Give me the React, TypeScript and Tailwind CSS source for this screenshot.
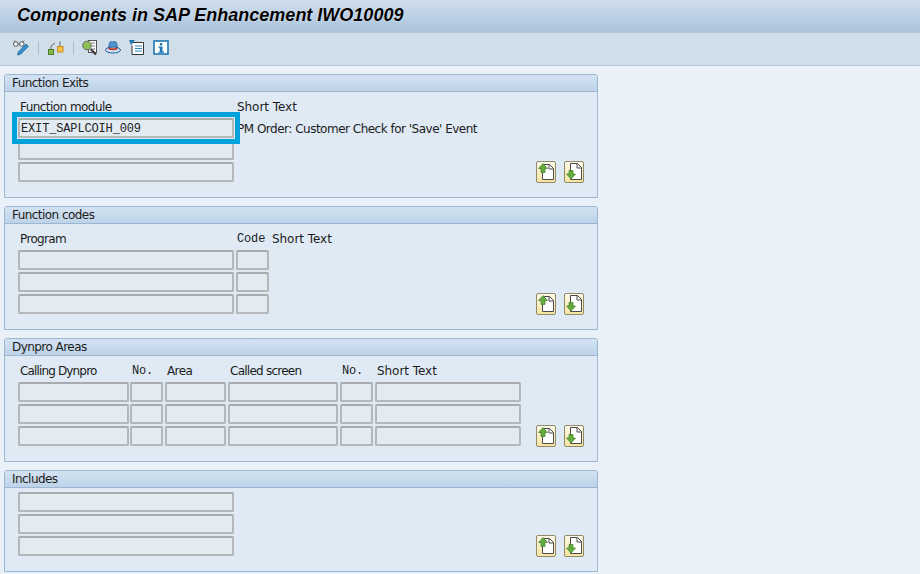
import React from "react";

const MONO = "font-['Liberation_Mono',monospace]";

function Field({ w, children }: { w: string; children?: React.ReactNode }) {
  return (
    <div
      className={`${w} h-5 shrink-0 rounded-[2px] border-2 border-[#b5b8ba] border-t-[#a9acae] bg-[#e3ebf2] pl-[1px] ${MONO} text-[12px] leading-[18px] tracking-[-0.15px] text-[#222] whitespace-pre`}
    >
      {children}
    </div>
  );
}

function Label({ w, className = "", children }: { w: string; className?: string; children?: React.ReactNode }) {
  return (
    <div
      className={`${w} shrink-0 whitespace-pre font-['DejaVu_Sans',sans-serif] text-[12px] leading-[16px] text-[#1c1c1c] ${className}`}
    >
      {children}
    </div>
  );
}

function MonoLabel({ w, className = "pl-[1px]", children }: { w: string; className?: string; children?: React.ReactNode }) {
  return (
    <div className={`${w} shrink-0 whitespace-pre ${className} ${MONO} text-[12px] leading-[15px] tracking-[-0.15px] text-[#1c1c1c]`}>
      {children}
    </div>
  );
}

function PageBtn({ down }: { down?: boolean }) {
  return (
    <div className="flex h-[22px] w-[20px] items-center justify-center rounded-[2px] border border-[#8f8a6a] bg-gradient-to-b from-[#fdf9e6] to-[#f8e4a0]">
      <svg width="18" height="20" viewBox="0 0 18 20">
        {down ? (
          <>
            <path d="M5.500 1.500h7l4 4v12h-11z" fill="#fff" stroke="#4a4a4a" strokeWidth="1" />
            <path d="M12 1.500v4.500h4.500" fill="none" stroke="#4a4a4a" strokeWidth="1" />
            <path d="M4 8.500h4v3.500h2.500l-4.500 5-4.500-5H4z" fill="#63ad3e" stroke="#3f7d24" strokeWidth=".7" />
          </>
        ) : (
          <>
            <path d="M7 2.500h5.500l4 4v11h-11v-7" fill="#fff" stroke="#4a4a4a" strokeWidth="1" />
            <path d="M12 2.500v4.500h4.500" fill="none" stroke="#4a4a4a" strokeWidth="1" />
            <path d="M6 1.500l4.500 5H8v4H4v-4H1.500z" fill="#63ad3e" stroke="#3f7d24" strokeWidth=".7" />
          </>
        )}
      </svg>
    </div>
  );
}

function Panel({
  title,
  h,
  children,
}: {
  title: string;
  h: string;
  children: React.ReactNode;
}) {
  return (
    <section className={`relative w-[594px] ${h} rounded-t-[3px] border border-[#9cb7d3] bg-[#dfeaf5]`}>
      <div className="h-[17px] rounded-t-[2px] border-b border-[#9cb7d3] bg-gradient-to-b from-[#d3e2f1] to-[#bed3e8] pl-[7px] font-['DejaVu_Sans',sans-serif] text-[12px] leading-[17px] tracking-[-0.55px] text-[#1c1c1c]">
        {title}
      </div>
      {children}
      <div className="absolute bottom-[14px] right-[13px] flex gap-[8px]">
        <PageBtn />
        <PageBtn down />
      </div>
    </section>
  );
}

function Tool({ children, w = 16 }: { children: React.ReactNode; w?: number }) {
  return (
    <svg width={w} height="16" viewBox={`0 0 ${w} 16`} className="shrink-0">
      {children}
    </svg>
  );
}

const Sep = ({ className = "mx-[9px]" }: { className?: string }) => <div className={`${className} h-[14px] w-px bg-[#a9bccf]`} />;

export default function App() {
  return (
    <div className="h-[574px] w-[920px] overflow-hidden bg-[#e9f0f7]">
      <header className="flex h-8 items-center bg-gradient-to-b from-[#cfdeed] to-[#aac3dc] pb-[2px] pl-[17px] font-['Liberation_Sans',sans-serif] text-[18px] font-bold italic text-black [text-shadow:0_0_1px_#fff]">
        Components in SAP Enhancement IWO10009
      </header>
      <div className="flex h-[34px] items-center border-t border-b border-[#b4c6d8] bg-[#d0deea] pb-[2px] pl-[13px]">
        <Tool>
          <circle cx="2.800" cy="4" r="2.300" fill="#eef3f7" stroke="#555" />
          <circle cx="8.800" cy="4" r="2.300" fill="#eef3f7" stroke="#555" />
          <path d="M5 4h1.500M1 2l1-1.500M10 2l1-1.500" stroke="#555" strokeWidth=".8" fill="none" />
          <path d="M4.500 15l.8-3 7.700-8 2.500 2.300-7.800 7.900z" fill="#3d8fc9" stroke="#1f6ea8" strokeWidth=".8" />
        </Tool>
        <Sep />
        <Tool>
          <rect x=".5" y="9.500" width="5" height="5" fill="#86b84a" stroke="#4f7d25" />
          <rect x="9.500" y="6.500" width="5.500" height="5.500" fill="#f5c04a" stroke="#d08a20" />
          <path d="M3 9V6l4-3M12 6V1.500" fill="none" stroke="#666" strokeWidth="1" />
        </Tool>
        <Sep className="ml-[9px] mr-[8px]" />
        <div className="flex items-center gap-[8px]">
          <Tool w={15}>
            <rect x="6.500" y=".5" width="8" height="12" fill="#fff" stroke="#555" />
            <path d="M9 3h4M10 6h3M10 9h3" stroke="#777" />
            <circle cx="5" cy="5.500" r="4.300" fill="#8cc152" stroke="#666" />
            <path d="M8.500 9l5.500 5.500" stroke="#3f3f3f" strokeWidth="2.200" />
          </Tool>
          <Tool>
            <path d="M3.500 8l1-5.500c1.500-1.500 3-.7 3.500-.5.500-.2 2-1 3.500.5l1 5.500z" fill="#4f95cf" stroke="#1f5f95" strokeWidth=".8" />
            <ellipse cx="8" cy="10" rx="7.500" ry="3" fill="#cfe3f5" stroke="#1f5f95" />
            <path d="M3.500 8.300c3 1.300 6 1.300 9 0" stroke="#c0392b" strokeWidth="2" fill="none" />
          </Tool>
          <Tool>
            <path d="M0 0h6L2 5z" fill="#1f77b4" />
            <path d="M4 2.500h10.500v12H3v-9" fill="#fff" stroke="#333" />
            <path d="M6 6h7M6 8.500h7M6 11h7" stroke="#2a86c4" />
          </Tool>
          <Tool>
            <rect x="1" y="1" width="14" height="13" fill="#fff" stroke="#1f77b4" strokeWidth="1.600" />
            <rect x="6.800" y="3" width="2.500" height="2.400" fill="#1f77b4" />
            <path d="M5.500 6.500h4v5H11v1.200H5.500v-1.200h1.300V7.700H5.500z" fill="#1f77b4" />
          </Tool>
        </div>
      </div>

      <main className="flex flex-col gap-2 pl-1 pt-2">
        <Panel title="Function Exits" h="h-[124px]">
          <div className="relative pl-[13px] pt-[7px]">
            <div className="flex">
              <Label w="w-[219px]" className="pl-[2px] tracking-[-0.55px]">Function module</Label>
              <Label w="w-[240px]" className="tracking-[-0.05px]">Short Text</Label>
            </div>
            <div className="mt-[3px] flex flex-col gap-[2px]">
              <div className="flex items-center">
                <div className="relative">
                  <Field w="w-[216px]">EXIT_SAPLCOIH_009</Field>
                  <div className="pointer-events-none absolute -inset-x-[6px] -inset-y-[6px] border-[5px] border-[#00a3d9]" />
                </div>
                <span className="ml-[3px] pt-[2px] font-['DejaVu_Sans',sans-serif] text-[12px] tracking-[-0.5px] text-[#1c1c1c]">
                  PM Order: Customer Check for 'Save' Event
                </span>
              </div>
              <Field w="w-[216px]" />
              <Field w="w-[216px]" />
            </div>
          </div>
        </Panel>

        <Panel title="Function codes" h="h-[124px]">
          <div className="pl-[13px] pt-[7px]">
            <div className="flex items-center">
              <Label w="w-[218px]" className="pl-[2px] tracking-[-0.65px]">Program</Label>
              <MonoLabel w="w-[35px]">Code</MonoLabel>
              <Label w="w-[100px]" className="pl-[1px] tracking-[-0.05px]">Short Text</Label>
            </div>
            <div className="mt-[3px] flex flex-col gap-[2px]">
              {[0, 1, 2].map((i) => (
                <div key={i} className="flex gap-[2px]">
                  <Field w="w-[216px]" />
                  <Field w="w-[33px]" />
                </div>
              ))}
            </div>
          </div>
        </Panel>

        <Panel title="Dynpro Areas" h="h-[124px]">
          <div className="pl-[13px] pt-[7px]">
            <div className="flex items-center">
              <Label w="w-[112px]" className="pl-[2px] tracking-[-0.85px]">Calling Dynpro</Label>
              <MonoLabel w="w-[35px]" className="pl-[2px]">No.</MonoLabel>
              <Label w="w-[63px]" className="pl-[2px] tracking-[-0.6px]">Area</Label>
              <Label w="w-[112px]" className="pl-[2px] tracking-[-0.75px]">Called screen</Label>
              <MonoLabel w="w-[35px]" className="pl-[2px]">No.</MonoLabel>
              <Label w="w-[146px]" className="pl-[2px] tracking-[-0.05px]">Short Text</Label>
            </div>
            <div className="mt-[3px] flex flex-col gap-[2px]">
              {[0, 1, 2].map((i) => (
                <div key={i} className="flex gap-[2px]">
                  <Field w="w-[111px] mr-[-1px]" />
                  <Field w="w-[33px]" />
                  <Field w="w-[61px]" />
                  <Field w="w-[110px]" />
                  <Field w="w-[33px]" />
                  <Field w="w-[146px]" />
                </div>
              ))}
            </div>
          </div>
        </Panel>

        <Panel title="Includes" h="h-[102px]">
          <div className="flex flex-col gap-[2px] pl-[13px] pt-[4px]">
            <Field w="w-[216px]" />
            <Field w="w-[216px]" />
            <Field w="w-[216px]" />
          </div>
        </Panel>
      </main>
    </div>
  );
}
